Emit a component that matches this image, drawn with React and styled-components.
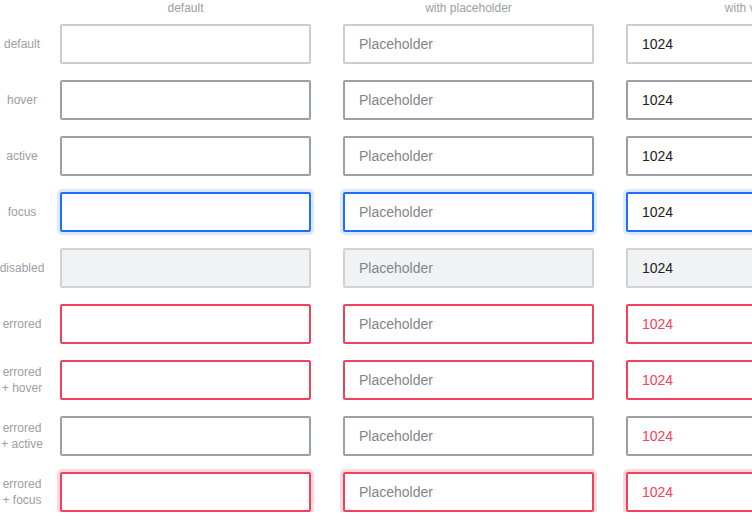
import React from "react";
import styled, { createGlobalStyle, css } from "styled-components";

const Global = createGlobalStyle`
  html, body { margin: 0; padding: 0; background: #fff; overflow: hidden; }
  body { font-family: "Liberation Sans", Arial, sans-serif; }
`;

const Page = styled.div`
  display: flex;
  flex-direction: column;
  gap: 16px;
  width: max-content;
`;

const Row = styled.div`
  display: flex;
  gap: 16px;
  margin-bottom: ${(p) => (p.$header ? "-8px" : "0")};
`;

const Cells = styled.div`
  display: grid;
  grid-template-columns: repeat(3, 251px);
  column-gap: 32px;
`;

const Head = styled.div`
  font-size: 12px;
  line-height: 16px;
  color: #9aa0a6;
  text-align: center;
`;

const RowLabel = styled.div`
  flex: 0 0 44px;
  min-width: 0;
  width: 44px;
  display: flex;
  align-items: center;
  justify-content: center;
  text-align: center;
  font-size: 12px;
  line-height: 16px;
  color: #9aa0a6;
  white-space: nowrap;
`;

const BLUE = "#1e6fff";
const RED = "#f2415a";

const Field = styled.div`
  box-sizing: border-box;
  height: 40px;
  border: 2px solid #cacdd1;
  border-radius: 2px;
  background: #fff;
  display: flex;
  align-items: center;
  padding-left: 14px;
  font-size: 14px;
  color: ${(p) => (p.$error ? RED : "#202124")};
  ${(p) =>
    (p.$state === "hover" || p.$state === "active") &&
    css`
      border-color: #9aa0a6;
    `}
  ${(p) =>
    p.$state === "focus" &&
    css`
      border-color: ${BLUE};
      box-shadow: 0 0 0 3px #dde9fd;
    `}
  ${(p) =>
    p.$state === "disabled" &&
    css`
      background: #f1f2f4;
      border-color: #cfd2d6;
    `}
  ${(p) =>
    p.$error &&
    p.$state !== "active" &&
    css`
      border-color: ${RED};
    `}
  ${(p) =>
    p.$error &&
    p.$state === "focus" &&
    css`
      box-shadow: 0 0 0 3px #fdd9de;
    `}
`;

const Placeholder = styled.span`
  color: #80868b;
`;

const rows = [
  { label: ["default"], state: "default" },
  { label: ["hover"], state: "hover" },
  { label: ["active"], state: "active" },
  { label: ["focus"], state: "focus" },
  { label: ["disabled"], state: "disabled" },
  { label: ["errored"], state: "default", error: true },
  { label: ["errored", "+ hover"], state: "hover", error: true },
  { label: ["errored", "+ active"], state: "active", error: true },
  { label: ["errored", "+ focus"], state: "focus", error: true },
];

export default function App() {
  return (
    <>
      <Global />
      <Page>
        <Row $header>
          <RowLabel />
          <Cells>
            <Head>default</Head>
            <Head>with placeholder</Head>
            <Head>with value</Head>
          </Cells>
        </Row>
        {rows.map((r, i) => (
          <Row key={i}>
            <RowLabel>
              <div>
                {r.label.map((l, j) => (
                  <div key={j}>{l}</div>
                ))}
              </div>
            </RowLabel>
            <Cells>
              <Field $state={r.state} $error={r.error} />
              <Field $state={r.state} $error={r.error}>
                <Placeholder>Placeholder</Placeholder>
              </Field>
              <Field $state={r.state} $error={r.error}>
                1024
              </Field>
            </Cells>
          </Row>
        ))}
      </Page>
    </>
  );
}
